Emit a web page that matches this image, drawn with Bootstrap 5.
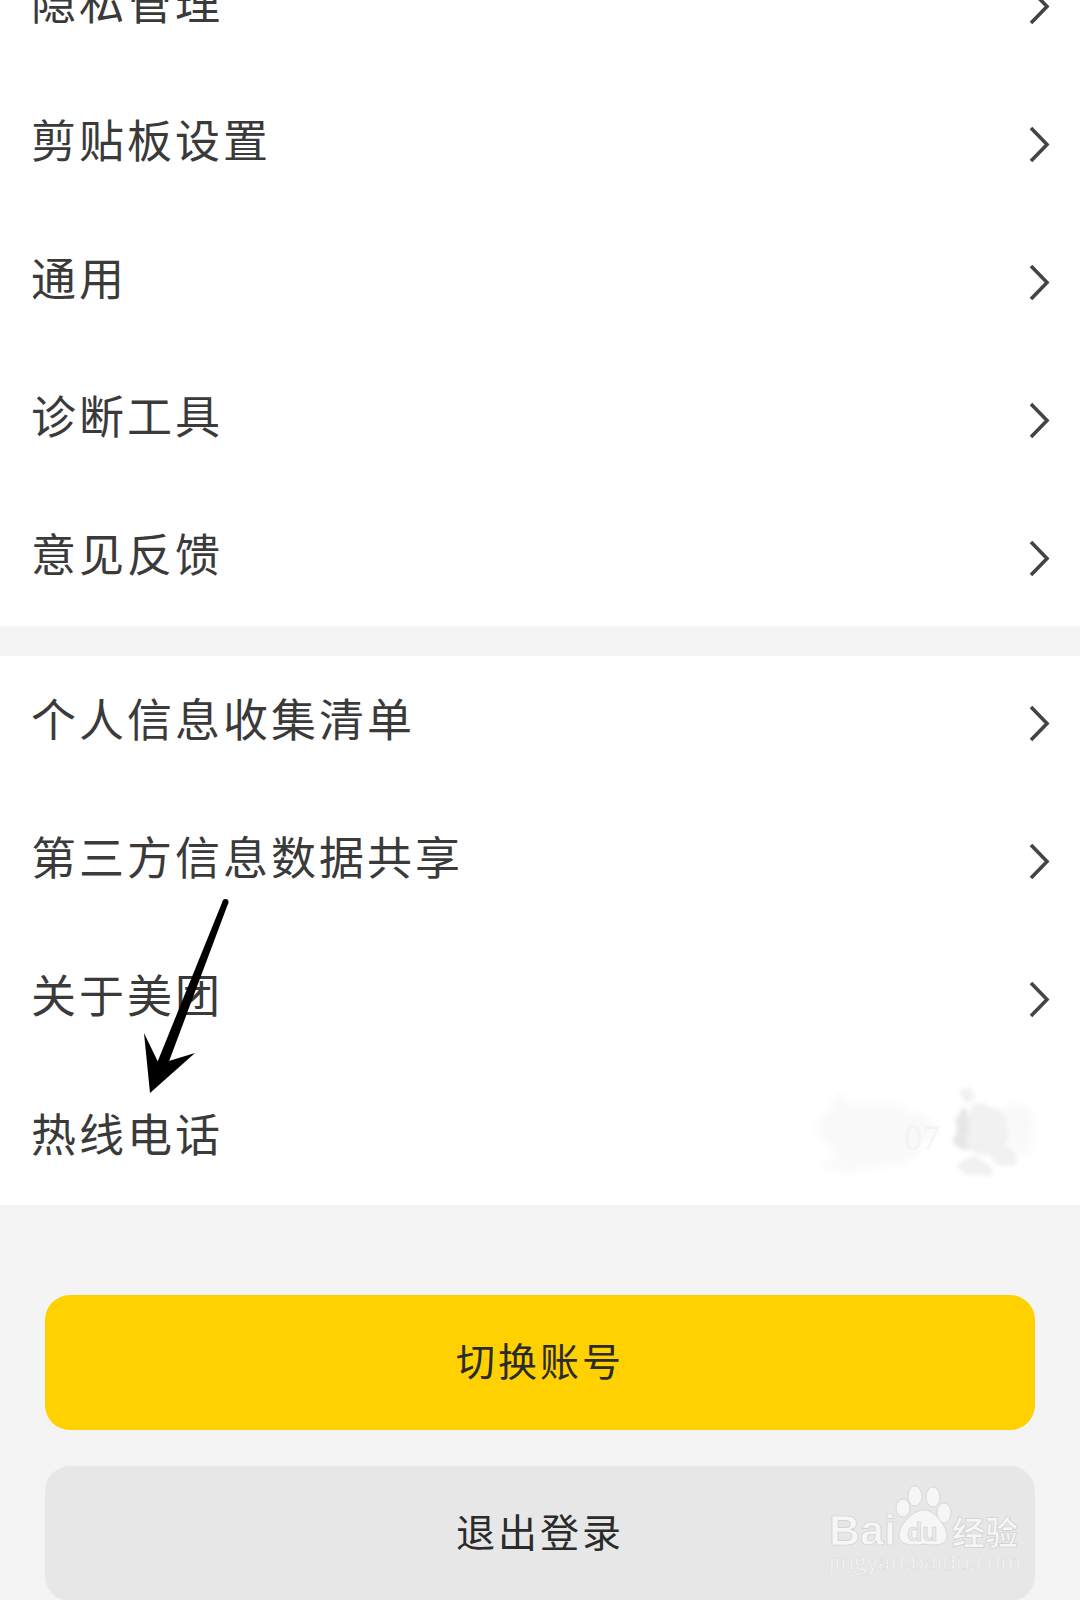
<!DOCTYPE html>
<html lang="zh-CN">
<head>
    <meta charset="UTF-8">
    <meta name="viewport" content="width=device-width, initial-scale=1.0">
    <title>设置</title>
    <link href="https://cdn.jsdelivr.net/npm/bootstrap@5.3.0/dist/css/bootstrap.min.css" rel="stylesheet">
    <style>
        body {
            background: #f4f4f4;
            font-family: "Noto Sans CJK SC", sans-serif;
        }
        .screen {
            height: 1600px;
            overflow: hidden;
            position: relative;
        }
        .scrolled-list {
            margin-top: -64px;
        }
        .second-list {
            margin-top: 30px;
        }
        .setting-row {
            height: 138px;
            padding: 0 30px 10px 31px;
            border: 0;
            background: #fff;
            color: #3a3a3a;
            font-size: 45px;
            line-height: 1;
            letter-spacing: 3px;
        }
        .second-list .setting-row {
            padding-bottom: 16px;
        }
        .second-list .setting-row:last-child {
            height: 135px;
            padding-bottom: 10px;
        }
        .setting-arrow {
            width: 22px;
            height: 37px;
            margin-top: 12px;
            fill: none;
            stroke: #444;
            stroke-width: 3.6;
        }
        .actions {
            padding: 90px 45px 0;
            gap: 36px;
        }
        .action-btn {
            height: 135px;
            padding: 0 0 6px;
            border: 0;
            border-radius: 25px;
            font-size: 39px;
            letter-spacing: 3px;
            color: #2b2b2b;
            flex-shrink: 0;
        }
        .action-yellow { background: #ffd100; }
        .action-grey { background: #e7e7e7; }
        .overlay {
            position: absolute;
            left: 0;
            top: 0;
            pointer-events: none;
        }
        .mark-latin {
            font-family: "Liberation Sans", sans-serif;
            font-weight: 700;
        }
        .mark-faint {
            font-family: "Liberation Serif", serif;
        }
        .mark-domain {
            font-family: "Open Sans", sans-serif;
        }
        .mark-cjk {
            font-family: "Noto Sans CJK SC", sans-serif;
            font-weight: 700;
        }
    </style>
</head>
<body>
    <div class="screen d-flex flex-column">
        <div class="list-group list-group-flush rounded-0 scrolled-list">
            <div class="list-group-item setting-row d-flex align-items-center justify-content-between"><span>隐私管理</span><svg class="setting-arrow" viewBox="0 0 22 37"><path d="M3 2 L19 18.5 L3 35"/></svg></div>
            <div class="list-group-item setting-row d-flex align-items-center justify-content-between"><span>剪贴板设置</span><svg class="setting-arrow" viewBox="0 0 22 37"><path d="M3 2 L19 18.5 L3 35"/></svg></div>
            <div class="list-group-item setting-row d-flex align-items-center justify-content-between"><span>通用</span><svg class="setting-arrow" viewBox="0 0 22 37"><path d="M3 2 L19 18.5 L3 35"/></svg></div>
            <div class="list-group-item setting-row d-flex align-items-center justify-content-between"><span>诊断工具</span><svg class="setting-arrow" viewBox="0 0 22 37"><path d="M3 2 L19 18.5 L3 35"/></svg></div>
            <div class="list-group-item setting-row d-flex align-items-center justify-content-between"><span>意见反馈</span><svg class="setting-arrow" viewBox="0 0 22 37"><path d="M3 2 L19 18.5 L3 35"/></svg></div>
        </div>
        <div class="list-group list-group-flush rounded-0 second-list">
            <div class="list-group-item setting-row d-flex align-items-center justify-content-between"><span>个人信息收集清单</span><svg class="setting-arrow" viewBox="0 0 22 37"><path d="M3 2 L19 18.5 L3 35"/></svg></div>
            <div class="list-group-item setting-row d-flex align-items-center justify-content-between"><span>第三方信息数据共享</span><svg class="setting-arrow" viewBox="0 0 22 37"><path d="M3 2 L19 18.5 L3 35"/></svg></div>
            <div class="list-group-item setting-row d-flex align-items-center justify-content-between"><span>关于美团</span><svg class="setting-arrow" viewBox="0 0 22 37"><path d="M3 2 L19 18.5 L3 35"/></svg></div>
            <div class="list-group-item setting-row d-flex align-items-center justify-content-between"><span>热线电话</span></div>
        </div>
        <div class="actions d-flex flex-column">
            <button type="button" class="btn action-btn action-yellow">切换账号</button>
            <button type="button" class="btn action-btn action-grey">退出登录</button>
        </div>

        <!-- hand drawn arrow and the watermarks lie over the page -->
        <svg class="overlay" width="1080" height="1600" viewBox="0 0 1080 1600">
            <defs>
                <filter id="inky" x="-30%" y="-30%" width="160%" height="160%">
                    <feTurbulence type="fractalNoise" baseFrequency="0.05" numOctaves="3" seed="4" result="noise"/>
                    <feDisplacementMap in="SourceGraphic" in2="noise" scale="16" result="moved"/>
                    <feGaussianBlur in="moved" stdDeviation="2"/>
                </filter>
                <filter id="cloud" x="-30%" y="-30%" width="160%" height="160%">
                    <feTurbulence type="fractalNoise" baseFrequency="0.03" numOctaves="3" seed="9" result="noise"/>
                    <feDisplacementMap in="SourceGraphic" in2="noise" scale="26" result="moved"/>
                    <feGaussianBlur in="moved" stdDeviation="4"/>
                </filter>
            </defs>

            <!-- ink splash -->
            <g filter="url(#cloud)" fill="#f9f9f9">
                <ellipse cx="880" cy="1135" rx="56" ry="32"/>
                <ellipse cx="840" cy="1120" rx="10" ry="26"/>
                <ellipse cx="850" cy="1165" rx="30" ry="8"/>
                <ellipse cx="1020" cy="1130" rx="16" ry="26"/>
            </g>
            <g filter="url(#inky)" fill="#f1f1f1">
                <ellipse cx="985" cy="1130" rx="24" ry="26"/>
                <ellipse cx="1003" cy="1155" rx="13" ry="8"/>
                <ellipse cx="973" cy="1166" rx="14" ry="9"/>
                <ellipse cx="969" cy="1097" rx="5" ry="8"/>
            </g>
            <path filter="url(#inky)" fill="#e6e6e6" d="M960 1112 L966 1108 L967 1140 L972 1152 L962 1150 L950 1140 Z"/>
            <text class="mark-faint" x="904" y="1150" font-size="36" fill="#f4f4f4">07</text>

            <!-- arrow -->
            <circle cx="225.5" cy="902" r="3" fill="#000"/>
            <path d="M222.7 901 L228.3 903 L165 1072 L155 1068 Z" fill="#000"/>
            <path d="M150 1093 L144 1033 L159 1064 L195 1053 Z" fill="#000"/>

            <!-- baidu logo -->
            <g fill="#f6f6f6" stroke="#d2d2d2" stroke-width="0.8">
                <ellipse cx="903" cy="1508" rx="7" ry="9"/>
                <ellipse cx="915" cy="1496" rx="7" ry="10"/>
                <ellipse cx="933" cy="1497" rx="7" ry="10"/>
                <ellipse cx="944" cy="1513" rx="7" ry="10"/>
                <path d="M924 1510 C936 1510 947 1528 947 1536 C947 1546 935 1546 924 1544 C913 1546 899 1546 899 1535 C899 1526 912 1510 924 1510 Z"/>
            </g>
            <g stroke="#cfcfcf" stroke-width="0.7" fill="#f6f6f6">
                <text class="mark-latin" x="829" y="1545" font-size="43">Bai</text>
                <text class="mark-cjk" x="952" y="1545" font-size="33">经验</text>
            </g>
            <text class="mark-latin" x="907" y="1541" font-size="25" fill="#e9e9e9" stroke="#cfcfcf" stroke-width="0.5">du</text>
            <text class="mark-domain" x="829" y="1570" font-size="22.6" fill="#f6f6f6" stroke="#d6d6d6" stroke-width="0.4">jingyan.baidu.com</text>
        </svg>
    </div>
    <script src="https://cdn.jsdelivr.net/npm/bootstrap@5.3.0/dist/js/bootstrap.bundle.min.js"></script>
</body>
</html>
